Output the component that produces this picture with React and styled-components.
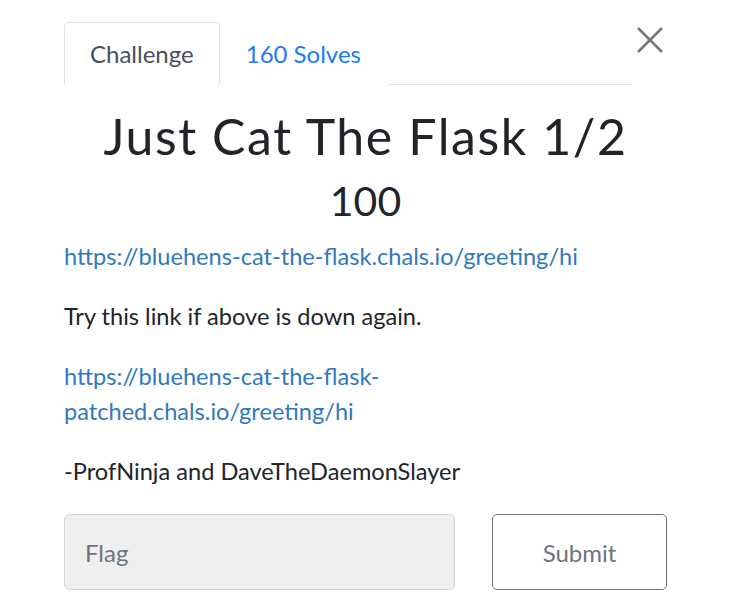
import React from 'react';
import styled, { createGlobalStyle } from 'styled-components';

const GlobalStyle = createGlobalStyle`
  body {
    margin: 0;
    background: #fff;
    font-family: Lato, "Open Sans", sans-serif;
    color: #212529;
  }
`;

const Modal = styled.div`
  width: 603px;
  padding: 22px 0 0 64px;
`;

const TabRow = styled.div`
  display: flex;
  align-items: flex-start;
`;

const Tabs = styled.ul`
  display: flex;
  flex: 1;
  list-style: none;
  margin: 0;
  padding: 0;
  border-bottom: 1px solid #dee2e6;
`;

const Tab = styled.li`
  height: 61px;
  display: flex;
  align-items: center;
  padding: 0 25px;
  margin-bottom: -1px;
  font-size: 24px;
  border: 1px solid ${(p) => (p.active ? '#dee2e6' : 'transparent')};
  border-bottom-color: ${(p) => (p.active ? '#fff' : 'transparent')};
  border-radius: 5px 5px 0 0;
  color: ${(p) => (p.active ? '#495057' : '#1a7bf4')};
  background: #fff;
`;

const Close = styled.button`
  width: 35px;
  height: 36px;
  padding: 0;
  border: none;
  background: none;
  display: flex;
  align-items: center;
  justify-content: center;
`;

const Title = styled.h2`
  margin: 21px 0 0;
  text-align: center;
  font-weight: 400;
  font-size: 50px;
  line-height: 60px;
  letter-spacing: 1.6px;
`;

const Points = styled.h3`
  margin: 7px 0 0;
  text-align: center;
  font-weight: 400;
  font-size: 41px;
  line-height: 56px;
`;

const Description = styled.div`
  margin-top: 10px;
  font-size: 23.6px;
  line-height: 35px;

  p {
    margin: 0 0 25px;
  }

  a {
    color: #3079c0;
    text-decoration: none;
  }
`;

const FlagRow = styled.div`
  display: flex;
  gap: 37px;
  margin-top: 8px;
`;

const FlagInput = styled.input`
  flex: 0 0 391px;
  box-sizing: border-box;
  height: 76px;
  padding: 0 20px;
  font-family: inherit;
  font-size: 24px;
  background: #efefef;
  border: 1px solid #d4d6d9;
  border-radius: 5px;
  outline: none;

  &::placeholder {
    color: #6c757d;
  }
`;

const SubmitButton = styled.button`
  flex: 1;
  height: 76px;
  font-family: inherit;
  font-size: 24px;
  color: #6c757d;
  background: #fff;
  border: 1px solid #6c757d;
  border-radius: 5px;
`;

export default function App() {
  return (
    <>
      <GlobalStyle />
      <Modal>
        <TabRow>
          <Tabs>
            <Tab active>Challenge</Tab>
            <Tab>160 Solves</Tab>
          </Tabs>
          <Close aria-label="Close">
            <svg width="26" height="26" viewBox="0 0 26 26">
              <path d="M1 1L25 25M25 1L1 25" stroke="#777" strokeWidth="2.6" />
            </svg>
          </Close>
        </TabRow>
        <Title>Just Cat The Flask 1/2</Title>
        <Points>100</Points>
        <Description>
          <p>
            <a href="#">https://bluehens-cat-the-flask.chals.io/greeting/hi</a>
          </p>
          <p>Try this link if above is down again.</p>
          <p>
            <a href="#">
              https://bluehens-cat-the-flask-
              <br />
              patched.chals.io/greeting/hi
            </a>
          </p>
          <p>-ProfNinja and DaveTheDaemonSlayer</p>
        </Description>
        <FlagRow>
          <FlagInput placeholder="Flag" />
          <SubmitButton>Submit</SubmitButton>
        </FlagRow>
      </Modal>
    </>
  );
}
